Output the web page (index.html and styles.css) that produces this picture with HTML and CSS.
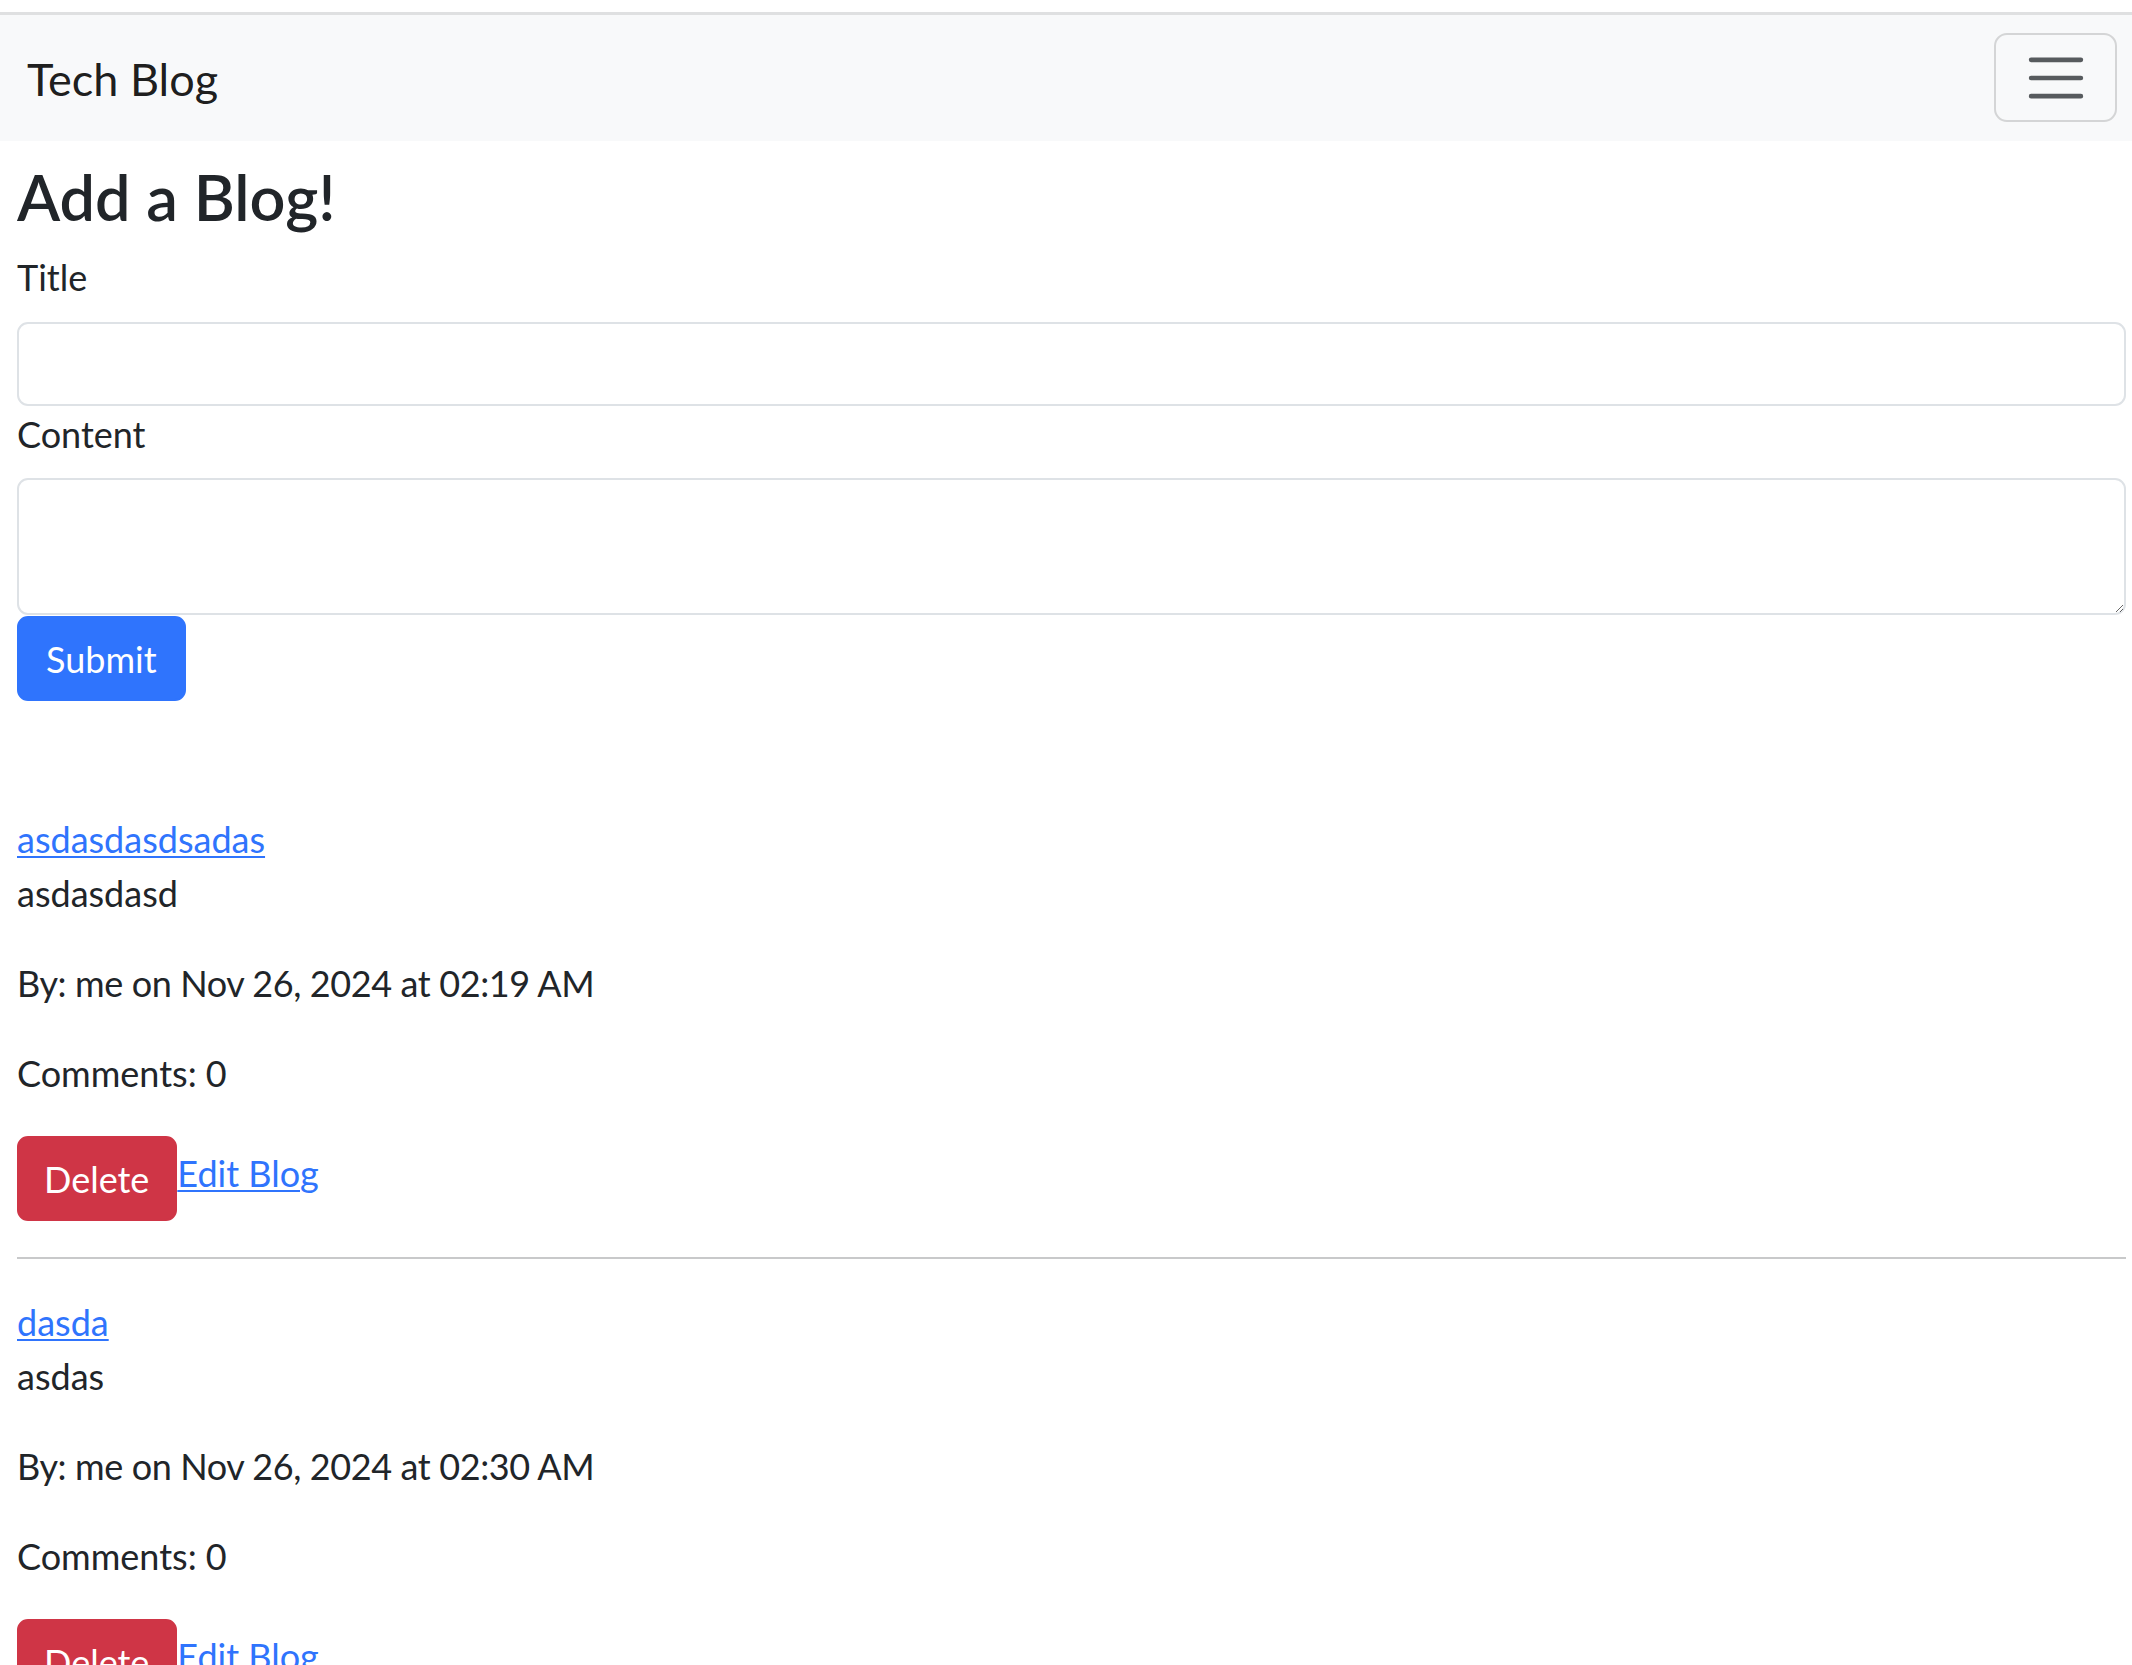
FILE: index.html
```html
<!DOCTYPE html>
<html lang="en">
<head>
<meta charset="utf-8">
<title>Tech Blog</title>
<link rel="stylesheet" href="styles.css">
</head>
<body>
<nav class="navbar">
  <a class="brand" href="#">Tech Blog</a>
  <button class="toggler" type="button" aria-label="Toggle navigation">
    <svg class="toggler-icon" viewBox="0 0 30 30" width="68" height="68" aria-hidden="true">
      <path d="M4 7h22M4 15h22M4 23h22" fill="none" stroke="rgba(33,37,41,0.75)" stroke-width="2" stroke-linecap="round" stroke-miterlimit="10"/>
    </svg>
  </button>
</nav>
<main class="container">
  <h2 class="page-title">Add a Blog!</h2>
  <form class="blog-form">
    <label class="form-label" for="title">Title</label>
    <input class="form-control" id="title" type="text">
    <label class="form-label" for="content">Content</label>
    <textarea class="form-control textarea" id="content"></textarea>
    <button class="btn btn-primary" type="button">Submit</button>
  </form>
  <br><br>
  <div class="post">
    <a class="post-title" href="#">asdasdasdsadas</a>
    <p>asdasdasd</p>
    <p class="meta">By: me on Nov 26, 2024 at 02:19 AM</p>
    <p>Comments: 0</p>
    <div class="actions">
      <button class="btn btn-danger" type="button">Delete</button>
      <a class="edit-link" href="#">Edit Blog</a>
    </div>
  </div>
  <hr class="divider">
  <div class="post">
    <a class="post-title" href="#">dasda</a>
    <p>asdas</p>
    <p class="meta">By: me on Nov 26, 2024 at 02:30 AM</p>
    <p>Comments: 0</p>
    <div class="actions">
      <button class="btn btn-danger" type="button">Delete</button>
      <a class="edit-link" href="#">Edit Blog</a>
    </div>
  </div>
  <hr class="divider">
</main>
</body>
</html>
```

FILE: styles.css
```css
* { box-sizing: border-box; }

html, body {
  margin: 0;
  padding: 0;
  background: #ffffff;
}

body {
  font-family: Lato, "Open Sans", sans-serif;
  font-size: 36px;
  line-height: 54px;
  color: #212529;
}

a {
  color: #2f74fd;
  text-decoration: underline;
  text-decoration-thickness: 2px;
  text-underline-offset: 3px;
}

/* Navbar */
.navbar {
  margin-top: 12px;
  border-top: 3px solid #dfe0e1;
  height: 129px;
  background: #f8f9fa;
  display: flex;
  align-items: center;
  justify-content: space-between;
  padding: 0 15px 0 27px;
}

.brand {
  font-size: 45px;
  line-height: 67px;
  margin-top: 3px;
  color: rgba(0, 0, 0, 0.9);
  text-decoration: none;
}

.toggler {
  width: 123px;
  height: 89px;
  padding: 0;
  margin-top: -1px;
  border: 2px solid #d4d5d6;
  border-radius: 13px;
  background: transparent;
  display: flex;
  align-items: center;
  justify-content: center;
}

.toggler-icon {
  display: block;
  width: 68px;
  height: 68px;
}

/* Content */
.container {
  padding: 0 6px 0 17px;
}

.page-title {
  margin: 18px 0 15px;
  font-size: 63px;
  line-height: 76px;
  font-weight: 600;
  color: #212529;
}

.form-label {
  display: block;
  margin-bottom: 18px;
}

.form-control {
  display: block;
  width: 100%;
  height: 84px;
  border: 2px solid #dee2e6;
  border-radius: 11px;
  background: #ffffff;
  font: inherit;
  padding: 13px 27px;
}

.textarea {
  height: 137px;
  margin-bottom: 1px;
}

.form-control + .form-label {
  margin-top: 1px;
  margin-bottom: 17px;
}

.blog-form {
  margin-bottom: 3px;
}

.btn {
  display: inline-block;
  height: 85px;
  padding: 0 27px;
  border: 2px solid transparent;
  border-radius: 11px;
  font-family: inherit;
  font-size: 36px;
  line-height: 54px;
  color: #ffffff;
  cursor: pointer;
}

.btn-primary {
  background: #2f74fd;
  border-color: #2f74fd;
}

.btn-danger {
  padding: 0 26px 0 25px;
  background: #cf3546;
  border-color: #cf3546;
}

.post p {
  margin: 0 0 36px;
}

.post .meta {
  letter-spacing: -0.4px;
}

.post-title {
  display: block;
  width: max-content;
}

.actions {
  display: flex;
  align-items: flex-start;
}

.edit-link {
  margin-top: 10px;
}

.divider {
  margin: 36px 0;
  border: 0;
  border-top: 2px solid #c8c9ca;
  height: 0;
}
```
